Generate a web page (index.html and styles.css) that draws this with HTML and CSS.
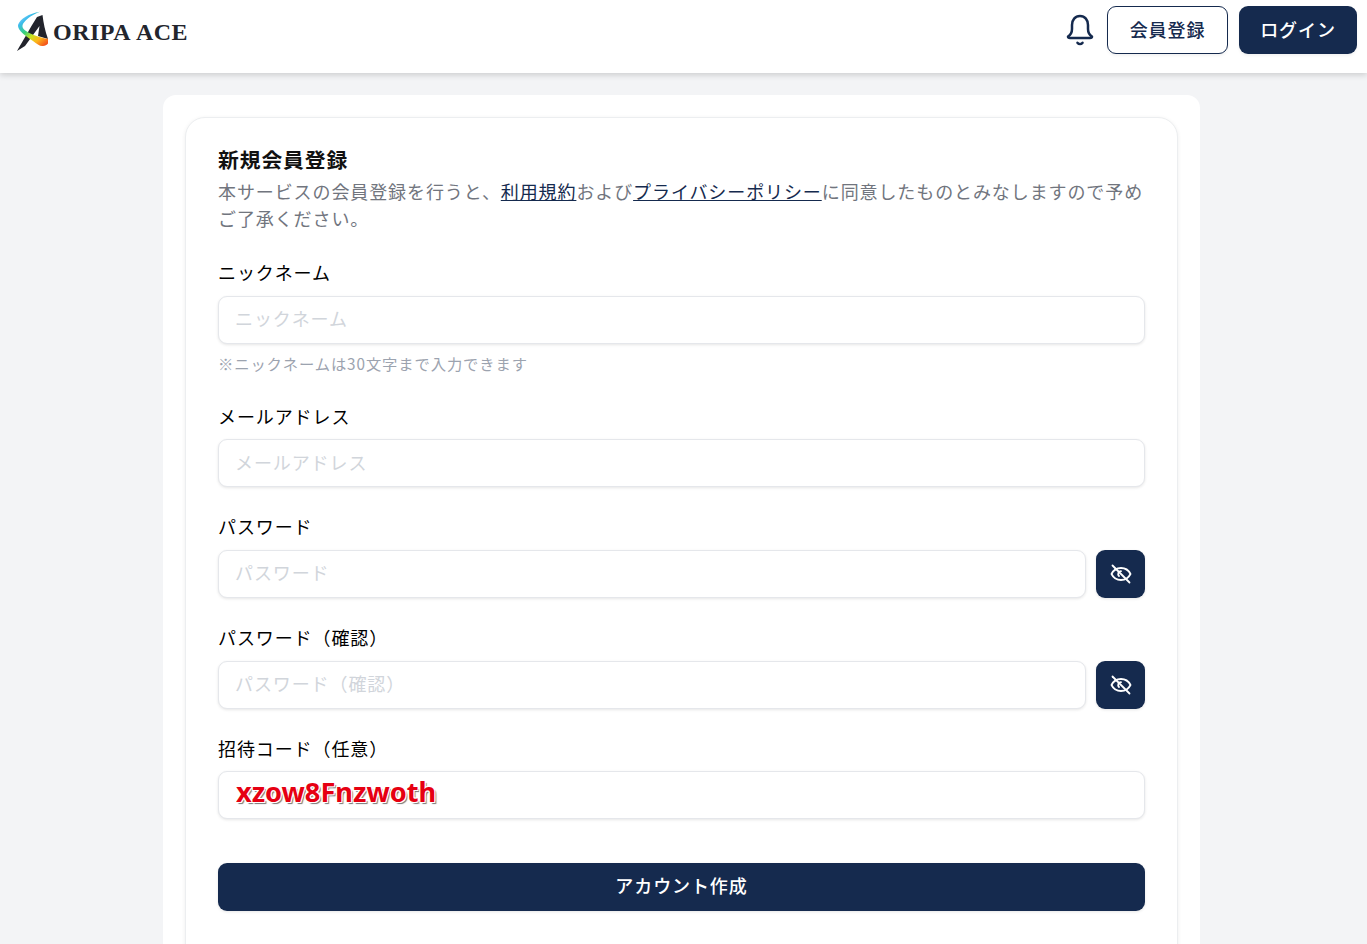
FILE: index.html
```html
<!DOCTYPE html>
<html lang="ja">
<head>
<meta charset="utf-8">
<title>ORIPA ACE</title>
<link rel="stylesheet" href="styles.css">
</head>
<body>
<header class="site-header">
  <a class="logo" href="#">
    <svg class="logo-mark" viewBox="0 0 34 42" width="34" height="42" aria-hidden="true">
      <defs>
        <linearGradient id="swoosh" x1="0.1" y1="0" x2="0.85" y2="1">
          <stop offset="0" stop-color="#b5e3f7"/>
          <stop offset="0.22" stop-color="#3dbbee"/>
          <stop offset="0.45" stop-color="#35d07a"/>
          <stop offset="0.62" stop-color="#c9e41f"/>
          <stop offset="0.8" stop-color="#fdb61a"/>
          <stop offset="1" stop-color="#f4561d"/>
        </linearGradient>
      </defs>
      <path d="M21 6L26.500 4C27.500 12 29 20 32 28L22 25L23.500 15L9 35L1 40C7 30 14 17 21 6Z" fill="#22242c"/>
      <path d="M24 .8C13 2.500 4 8 2 14C1.500 19 9 25 17 30C21 33 24 35.500 27 35C29 34.800 31 34 32 32.500L32 27.800C25 27 16 24 10 20C6 17.500 5.500 14.500 8 11.500C11 7.500 17 3.500 24 .8Z" fill="url(#swoosh)"/>
    </svg>
    <span class="logo-text">ORIPA ACE</span>
  </a>
  <div class="header-actions">
    <svg class="bell" viewBox="0 0 28 32" width="28" height="32" fill="none" stroke="#152a4e" stroke-width="2.500" stroke-linecap="round" stroke-linejoin="round" aria-hidden="true">
      <path d="M14 2C9 2 6 6 6 11V15C6 19 4.500 21 2 22.500C2 23.500 3 24 4 24H24C25 24 26 23.500 26 22.500C23.500 21 22 19 22 15V11C22 6 19 2 14 2Z"/>
      <path d="M11.500 28.800C13 30.500 15 30.500 16.500 28.800"/>
    </svg>
    <a class="btn btn-outline" href="#">会員登録</a>
    <a class="btn btn-solid" href="#">ログイン</a>
  </div>
</header>

<main class="page">
  <div class="panel">
    <section class="card">
      <h1 class="title">新規会員登録</h1>
      <p class="lead">本サービスの会員登録を行うと、<a href="#">利用規約</a>および<a href="#">プライバシーポリシー</a>に同意したものとみなしますので予めご了承ください。</p>

      <div class="field field-first">
        <label class="label">ニックネーム</label>
        <input class="input" type="text" placeholder="ニックネーム">
        <p class="hint">※ニックネームは30文字まで入力できます</p>
      </div>

      <div class="field field-after-hint">
        <label class="label">メールアドレス</label>
        <input class="input" type="text" placeholder="メールアドレス">
      </div>

      <div class="field">
        <label class="label">パスワード</label>
        <div class="input-row">
          <input class="input" type="password" placeholder="パスワード">
          <button class="eye" type="button" aria-label="表示切替">
            <svg viewBox="0 0 24 24" width="24" height="24" fill="none" stroke="#fff" stroke-width="1.800" stroke-linecap="round" stroke-linejoin="round"><path d="M2.500 12C4.500 8 8 6 12 6S19.500 8 21.500 12C19.500 16 16 18 12 18S4.500 16 2.500 12Z"/><path d="M12 9.200A2.800 2.800 0 0 0 10 14"/><path d="M3.500 3.500L20.500 20.500"/></svg>
          </button>
        </div>
      </div>

      <div class="field">
        <label class="label">パスワード（確認）</label>
        <div class="input-row">
          <input class="input" type="password" placeholder="パスワード（確認）">
          <button class="eye" type="button" aria-label="表示切替">
            <svg viewBox="0 0 24 24" width="24" height="24" fill="none" stroke="#fff" stroke-width="1.800" stroke-linecap="round" stroke-linejoin="round"><path d="M2.500 12C4.500 8 8 6 12 6S19.500 8 21.500 12C19.500 16 16 18 12 18S4.500 16 2.500 12Z"/><path d="M12 9.200A2.800 2.800 0 0 0 10 14"/><path d="M3.500 3.500L20.500 20.500"/></svg>
          </button>
        </div>
      </div>

      <div class="field">
        <label class="label">招待コード（任意）</label>
        <input class="input input-code" type="text" value="xzow8Fnzwoth">
      </div>

      <button class="submit" type="button">アカウント作成</button>
    </section>
  </div>
</main>
</body>
</html>
```
FILE: styles.css
```css
* { box-sizing: border-box; }
html, body { margin: 0; height: 944px; overflow: hidden; }
body {
  background: #f3f4f6;
  color: #111;
  font-family: "Inter", "Noto Sans CJK JP", sans-serif;
  font-size: 18px;
  letter-spacing: 0.05em;
}
.site-header {
  position: relative;
  z-index: 2;
  height: 73px;
  background: #fff;
  box-shadow: 0 2px 6px rgba(0, 0, 0, 0.16);
  display: flex;
  align-items: flex-start;
  justify-content: space-between;
  padding: 6px 10px 0 16px;
}
.logo { display: flex; align-items: flex-start; color: #23252d; text-decoration: none; margin-top: 5px; }
.logo-mark { flex: none; display: block; }
.logo-text {
  font-family: "Liberation Serif", serif;
  font-weight: 700;
  font-size: 24px;
  letter-spacing: 0.5px;
  word-spacing: 1px;
  line-height: 30px;
  margin: 6px 0 0 3px;
  white-space: nowrap;
}
.header-actions { display: flex; align-items: flex-start; }
.bell { margin: 8px 13px 0 0; display: block; }
.btn {
  height: 48px;
  display: flex;
  align-items: center;
  justify-content: center;
  padding-bottom: 2px;
  border-radius: 9px;
  text-decoration: none;
  font-size: 18px;
  font-weight: 500;
  box-shadow: 0 2px 3px rgba(0, 0, 0, 0.05);
}
.btn-outline { width: 121px; border: 1px solid #152a4e; background: #fff; color: #152a4e; margin-right: 11px; }
.btn-solid { width: 118px; background: #152a4e; color: #fff; }

.page { display: flex; justify-content: center; padding: 22px 4px 0 0; }
.panel {
  width: 1037px;
  height: 900px;
  background: #fff;
  border-radius: 13px;
  padding: 22px;
}
.card {
  height: 1000px;
  background: #fff;
  border: 1px solid #eceef0;
  border-radius: 20px;
  box-shadow: 0 1px 4px rgba(0, 0, 0, 0.07);
  padding: 28px 32px 0;
}
.title { margin: 0; font-size: 20.8px; font-weight: 700; line-height: 30px; color: #111; }
.lead { margin: 3px 0 0; font-size: 18px; line-height: 27px; color: #71757e; }
.lead a { color: #152a4e; text-decoration: underline; }
.field { margin-top: 27px; }
.field-first { margin-top: 27px; }
.field-after-hint { margin-top: 31px; }
.label { display: block; font-size: 18px; font-weight: 400; line-height: 28px; margin-bottom: 7.67px; color: #000; }
.input-row { display: flex; gap: 10px; }
.input {
  display: block;
  width: 100%;
  min-width: 0;
  height: 48px;
  background: #fff;
  border: 1px solid #e5e7eb;
  border-radius: 9px;
  box-shadow: 0 1px 3px rgba(0, 0, 0, 0.1);
  padding: 0 16px;
  font: inherit;
  letter-spacing: 0.05em;
  color: #111;
  outline: none;
}
.input::placeholder { color: #d1d5db; opacity: 1; }
.input-code {
  font-family: "Noto Sans", "Open Sans", sans-serif;
  font-weight: 700;
  font-size: 27.2px;
  letter-spacing: 0;
  color: #e60012;
  padding: 0 17px 8px;
  text-shadow: -1px -1px 0 #fff, 1px -1px 0 #fff, -1px 1px 0 #fff, 1px 1px 0 #fff, 2px 2px 1px #777;
}
.hint {
  margin: 9px 0 0;
  font-family: "Noto Sans CJK JP", sans-serif;
  font-size: 15.3px;
  line-height: 20px;
  color: #9ca3af;
}
.eye {
  flex: none;
  width: 49px;
  height: 48px;
  border: 0;
  border-radius: 9px;
  background: #152a4e;
  display: flex;
  align-items: center;
  justify-content: center;
  padding: 0;
  box-shadow: 0 1px 3px rgba(0, 0, 0, 0.1);
}
.submit {
  display: block;
  width: 100%;
  height: 48px;
  margin-top: 44px;
  padding-bottom: 6px;
  border: 0;
  border-radius: 9px;
  background: #152a4e;
  color: #fff;
  font: inherit;
  font-weight: 500;
  letter-spacing: 0.05em;
  box-shadow: 0 1px 3px rgba(0, 0, 0, 0.1);
}
```
